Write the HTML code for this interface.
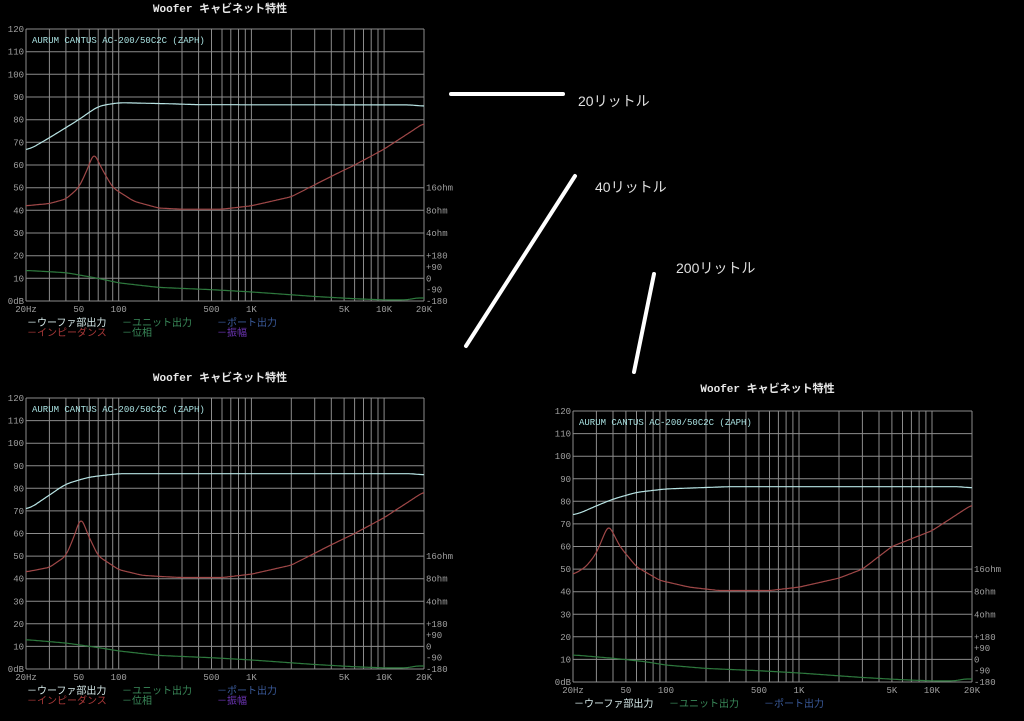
<!DOCTYPE html>
<html><head><meta charset="utf-8"><style>
html,body{margin:0;padding:0;background:#000;width:1024px;height:721px;overflow:hidden}
svg{display:block}
</style></head><body>
<svg id="s" width="1024" height="721" xmlns="http://www.w3.org/2000/svg" style="font-family:'Liberation Mono','Noto Sans CJK JP',monospace">
<rect width="1024" height="721" fill="#000"/>
<g id="g"></g>
<line x1="451" y1="94" x2="563" y2="94" stroke="#fff" stroke-width="4" stroke-linecap="round"/>
<line x1="575" y1="176" x2="466" y2="346" stroke="#fff" stroke-width="4" stroke-linecap="round"/>
<line x1="654" y1="274" x2="634" y2="372" stroke="#fff" stroke-width="4" stroke-linecap="round"/>
<g font-family="'Liberation Sans','Noto Sans CJK JP',sans-serif" font-size="14" fill="#e0e0e0">
<text x="578" y="106">20リットル</text>
<text x="595" y="192">40リットル</text>
<text x="676" y="273">200リットル</text>
</g>
</svg>
<script>
var NS="http://www.w3.org/2000/svg",G=document.getElementById('g');
function el(t,a,txt){var e=document.createElementNS(NS,t);for(var k in a)e.setAttribute(k,a[k]);if(txt!=null)e.textContent=txt;G.appendChild(e);return e;}
function interp(pts,f){var l=Math.log10(f);for(var i=0;i<pts.length-1;i++){var a=Math.log10(pts[i][0]),b=Math.log10(pts[i+1][0]);if(l<=b){var t=(l-a)/(b-a);return pts[i][1]+t*(pts[i+1][1]-pts[i][1]);}}return pts[pts.length-1][1];}
function chart(x0,x1,y0,y1,tY,cfg){
 var W=x1-x0,H=y1-y0;
 function X(f){return x0+W*Math.log10(f/20)/3;}
 function Y(d){return y1-H*d/120;}
 el('text',{x:(x0+x1)/2-5,y:tY,'font-size':11,fill:'#e8e8e8','text-anchor':'middle','font-weight':'bold'},'Woofer キャビネット特性');
 var fs=[20,30,40,50,60,70,80,90,100,200,300,400,500,600,700,800,900,1000,2000,3000,4000,5000,6000,7000,8000,9000,10000,20000];
 fs.forEach(function(f){var x=X(f).toFixed(1);el('line',{x1:x,y1:y0,x2:x,y2:y1,stroke:'#8c8c8c','stroke-width':1});});
 for(var d=0;d<=120;d+=10){var y=Y(d).toFixed(1);el('line',{x1:x0,y1:y,x2:x1,y2:y,stroke:'#8c8c8c','stroke-width':1});
  el('text',{x:x0-2,y:+y+3,'font-size':9,fill:'#a0a0a0','text-anchor':'end'},d==0?'0dB':d);}
 [['20Hz',20],['50',50],['100',100],['500',500],['1K',1000],['5K',5000],['10K',10000],['20K',20000]].forEach(function(a){
  el('text',{x:X(a[1]),y:y1+11,'font-size':9,fill:'#a0a0a0','text-anchor':'middle'},a[0]);});
 [['16ohm',50],['8ohm',40],['4ohm',30],['+180',20],['+90',15],['0',10],['-90',5],['-180',0]].forEach(function(a){
  el('text',{x:x1+2,y:Y(a[1])+3,'font-size':9,fill:'#a0a0a0'},a[0]);});
 el('text',{x:x0+6,y:y0+14,'font-size':9,fill:'#a8e0e0'},'AURUM CANTUS AC-200/50C2C (ZAPH)');
 function curve(pts,col,sm){var N=400,v=[];for(var i=0;i<=N;i++)v.push(interp(pts,20*Math.pow(1000,i/N)));
  var w=[];for(var i=0;i<=N;i++){var s=0,c=0;for(var k=-sm;k<=sm;k++){var j=i+k;if(j<0||j>N)continue;var g=Math.exp(-k*k/(sm*sm/2+0.01));s+=v[j]*g;c+=g;}w.push(s/c);}
  var s='';for(var i=0;i<=N;i++){var f=20*Math.pow(1000,i/N);s+=(i?'L':'M')+X(f).toFixed(1)+' '+Y(w[i]).toFixed(1);}
  el('path',{d:s,fill:'none',stroke:col,'stroke-width':1.2});}
 curve(cfg.ph,'#2e7a3e',8);curve(cfg.imp,'#a04848',5);curve(cfg.res,'#b8e4e4',10);
 var ly=y1+25;
 el('text',{x:x0+1,y:ly,'font-size':10,fill:'#d8ecec'},'－ウーファ部出力');
 el('text',{x:x0+96,y:ly,'font-size':10,fill:'#3a8a5a'},'－ユニット出力');
 el('text',{x:x0+191,y:ly,'font-size':10,fill:'#3a5a9a'},'－ポート出力');
 if(cfg.row2){ly+=10;
 el('text',{x:x0+1,y:ly,'font-size':10,fill:'#a83838'},'－インピーダンス');
 el('text',{x:x0+96,y:ly,'font-size':10,fill:'#3a8a5a'},'－位相');
 el('text',{x:x0+191,y:ly,'font-size':10,fill:'#6a34b0'},'－振幅');}
}
var impTail=[[130,44],[200,41],[300,40.5],[600,40.5],[1000,42],[2000,46],[4000,55],[6000,60],[10000,67],[20000,78.5]];
var ph=[[20,13.5],[40,12.5],[70,10],[100,8],[200,6],[500,5],[1000,4],[3000,2],[6000,1],[10000,0.5],[15000,0.5],[18000,1.5],[20000,1.2]];
chart(26,424,29,301,12,{row2:true,
 res:[[20,66],[30,72],[50,80],[70,86],[100,87.5],[250,87],[400,86.6],[17000,86.5],[18000,86],[20000,86]],
 imp:[[20,42],[30,43],[40,45],[50,50],[58,58],[65,66],[72,60],[90,50]].concat(impTail),ph:ph});
chart(26,424,398,669,381,{row2:true,
 res:[[20,70],[30,77],[40,82],[60,85],[100,86.5],[17000,86.5],[18000,86],[20000,86]],
 imp:[[20,43],[30,45],[40,50],[47,60],[52,68],[58,60],[70,50],[100,44],[150,41.5]].concat(impTail.slice(1)),ph:[[20,13],[40,11.5],[70,9.5],[100,8]].concat(ph.slice(4))});
chart(573,972,411,682,392,{row2:false,
 res:[[20,73.5],[30,78],[40,81],[60,84],[100,85.5],[300,86.5],[17000,86.5],[18000,86],[20000,86]],
 imp:[[20,47.5],[25,51],[30,57],[37,70],[45,60],[60,51],[90,45],[150,42],[250,40.5],[600,40.5],[1000,42],[2000,46],[3000,50],[5000,60],[10000,67],[20000,78.5]],
 ph:[[20,12],[40,10.5],[70,9],[100,7.5]].concat(ph.slice(4))});
</script>
</body></html>
